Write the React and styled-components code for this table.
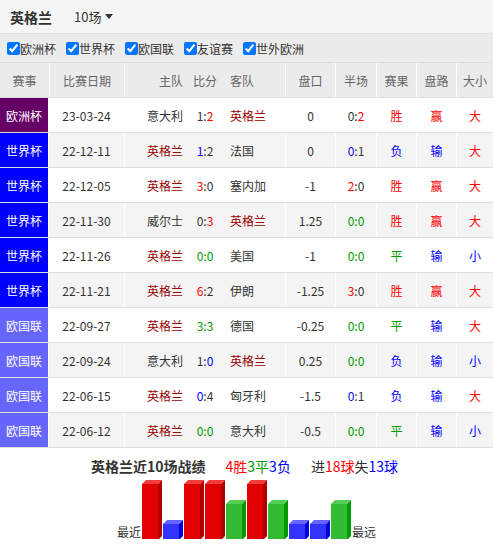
import React from 'react';
import styled, { createGlobalStyle } from 'styled-components';

const GlobalStyle = createGlobalStyle`
  body {
    margin: 0;
    background: #fff;
    font-family: "Noto Sans CJK SC", "Noto Sans", sans-serif;
    color: #333;
  }
`;

const Page = styled.div`
  width: 493px;
`;

const TopBar = styled.div`
  height: 34px;
  background: #f5f5f5;
  border-bottom: 1px solid #e2e2e2;
  box-sizing: border-box;
  display: flex;
  align-items: center;
  padding-left: 10px;
`;

const TeamTitle = styled.div`
  font-size: 14px;
  font-weight: bold;
  color: #333;
  width: 64px;
`;

const CountSelect = styled.div`
  font-size: 13px;
  color: #333;
  display: flex;
  align-items: center;
  gap: 4px;

  &::after {
    content: '';
    border-left: 4px solid transparent;
    border-right: 4px solid transparent;
    border-top: 5px solid #333;
  }
`;

const FilterBar = styled.div`
  height: 29px;
  background: #ececec;
  border-bottom: 1px solid #dedede;
  box-sizing: border-box;
  display: flex;
  align-items: center;
  padding-left: 7px;
  gap: 10px;
`;

const FilterItem = styled.label`
  display: flex;
  align-items: center;
  font-size: 12px;
  color: #333;

  input {
    margin: 0;
    width: 13px;
    height: 13px;
    accent-color: #0075ff;
  }
`;

const Row = styled.div`
  display: grid;
  grid-template-columns: 49px 75px 161px 50px 41px 40px 40px 37px;
  height: 35px;
  box-sizing: border-box;
  border-bottom: 1px solid #dddddd;
  background: ${p => (p.$head ? '#ebebeb' : p.$alt ? '#f4f4f4' : '#fff')};
  font-size: 12px;
`;

const Cell = styled.div`
  display: flex;
  align-items: center;
  justify-content: center;
  border-left: 1px solid #fff;
  color: ${p => p.$color || (p.$head ? '#666' : '#333')};

  &:first-child {
    border-left: none;
  }
`;

const EventCell = styled(Cell)`
  background: ${p => p.$bg};
  color: #fff;
  border-right: 1px solid #fff;
  & + ${Cell} {
    border-left: none;
  }
`;

const TeamsCell = styled.div`
  display: grid;
  grid-template-columns: 58px 44px 1fr;
  align-items: center;
  border-left: 1px solid #fff;
  color: ${p => (p.$head ? '#666' : '#333')};
`;

const Home = styled.span`
  text-align: right;
  color: ${p => (p.$eng ? '#990000' : 'inherit')};
`;

const Score = styled.span`
  text-align: center;
`;

const Away = styled.span`
  padding-left: 3px;
  color: ${p => (p.$eng ? '#990000' : 'inherit')};
`;

const Tone = styled.span`
  color: ${p => p.$c};
`;

const Summary = styled.div`
  padding-top: 8px;
  display: flex;
  flex-direction: column;
  align-items: center;
`;

const SummaryLine = styled.div`
  font-size: 14px;
  line-height: 20px;
  display: flex;
  gap: 20px;
  margin-left: -4px;
`;

const Lead = styled.span`
  font-weight: bold;
  color: #333;
`;

const Chart = styled.div`
  margin-top: 4px;
  display: flex;
  align-items: flex-end;
  gap: 1px;
  font-size: 12px;
  line-height: 14px;

  svg {
    display: block;
    margin-bottom: -1px;
  }
`;

const RED = '#ff0000';
const BLUE = '#0000ff';
const GREEN = '#009900';

const EVENT_BG = {
  '欧洲杯': '#660066',
  '世界杯': '#0000ff',
  '欧国联': '#6666ff',
};

const matches = [
  ['欧洲杯', '23-03-24', '意大利', '英格兰', '1:2', '0', '0:2', '胜', '赢', '大'],
  ['世界杯', '22-12-11', '英格兰', '法国', '1:2', '0', '0:1', '负', '输', '大'],
  ['世界杯', '22-12-05', '英格兰', '塞内加', '3:0', '-1', '2:0', '胜', '赢', '大'],
  ['世界杯', '22-11-30', '威尔士', '英格兰', '0:3', '1.25', '0:0', '胜', '赢', '大'],
  ['世界杯', '22-11-26', '英格兰', '美国', '0:0', '-1', '0:0', '平', '输', '小'],
  ['世界杯', '22-11-21', '英格兰', '伊朗', '6:2', '-1.25', '3:0', '胜', '赢', '大'],
  ['欧国联', '22-09-27', '英格兰', '德国', '3:3', '-0.25', '0:0', '平', '输', '大'],
  ['欧国联', '22-09-24', '意大利', '英格兰', '1:0', '0.25', '0:0', '负', '输', '小'],
  ['欧国联', '22-06-15', '英格兰', '匈牙利', '0:4', '-1.5', '0:1', '负', '输', '大'],
  ['欧国联', '22-06-12', '英格兰', '意大利', '0:0', '-0.5', '0:0', '平', '输', '小'],
];

const resultColor = { '胜': RED, '赢': RED, '大': RED, '负': BLUE, '输': BLUE, '小': BLUE, '平': GREEN };

// colour England's goals: red when ahead, blue when behind, all green on a draw
function ScoreText({ value, engHome }) {
  const [h, a] = value.split(':');
  const eng = engHome ? +h : +a;
  const opp = engHome ? +a : +h;
  if (eng === opp) return <Tone $c={GREEN}>{value}</Tone>;
  const c = eng > opp ? RED : BLUE;
  return engHome ? (
    <>
      <Tone $c={c}>{h}</Tone>:{a}
    </>
  ) : (
    <>
      {h}:<Tone $c={c}>{a}</Tone>
    </>
  );
}

const bars = ['胜', '负', '胜', '胜', '平', '胜', '平', '负', '负', '平'];
const barStyle = {
  '胜': { h: 56, front: '#e00000', top: '#f23b3b', side: '#b00000' },
  '平': { h: 36, front: '#33bb33', top: '#55cc55', side: '#009900' },
  '负': { h: 16, front: '#3333ff', top: '#6666ff', side: '#0000dd' },
};

function BarChart() {
  return (
    <svg width="209" height="60" viewBox="0 0 209 60">
      {bars.map((r, i) => {
        const { h, front, top, side } = barStyle[r];
        const x = i * 21;
        const y = 60 - h;
        return (
          <g key={i}>
            <rect x={x} y={y} width="16" height={h} fill={front} />
            <polygon points={`${x},${y} ${x + 4},${y - 4} ${x + 20},${y - 4} ${x + 16},${y}`} fill={top} />
            <polygon points={`${x + 16},${y} ${x + 20},${y - 4} ${x + 20},56 ${x + 16},60`} fill={side} />
          </g>
        );
      })}
    </svg>
  );
}

const filters = ['欧洲杯', '世界杯', '欧国联', '友谊赛', '世外欧洲'];

export default function App() {
  return (
    <Page>
      <GlobalStyle />
      <TopBar>
        <TeamTitle>英格兰</TeamTitle>
        <CountSelect>10场</CountSelect>
      </TopBar>
      <FilterBar>
        {filters.map(f => (
          <FilterItem key={f}>
            <input type="checkbox" defaultChecked />
            {f}
          </FilterItem>
        ))}
      </FilterBar>

      <Row $head>
        <Cell $head>赛事</Cell>
        <Cell $head>比赛日期</Cell>
        <TeamsCell $head>
          <Home>主队</Home>
          <Score>比分</Score>
          <Away>客队</Away>
        </TeamsCell>
        <Cell $head>盘口</Cell>
        <Cell $head>半场</Cell>
        <Cell $head>赛果</Cell>
        <Cell $head>盘路</Cell>
        <Cell $head>大小</Cell>
      </Row>

      {matches.map(([ev, date, home, away, score, line, half, res, pan, ou], i) => {
        const engHome = home === '英格兰';
        return (
          <Row key={date} $alt={i % 2 === 1}>
            <EventCell $bg={EVENT_BG[ev]}>{ev}</EventCell>
            <Cell>{date}</Cell>
            <TeamsCell>
              <Home $eng={engHome}>{home}</Home>
              <Score>
                <ScoreText value={score} engHome={engHome} />
              </Score>
              <Away $eng={!engHome}>{away}</Away>
            </TeamsCell>
            <Cell>{line}</Cell>
            <Cell>
              <ScoreText value={half} engHome={engHome} />
            </Cell>
            <Cell $color={resultColor[res]}>{res}</Cell>
            <Cell $color={resultColor[pan]}>{pan}</Cell>
            <Cell $color={resultColor[ou]}>{ou}</Cell>
          </Row>
        );
      })}

      <Summary>
        <SummaryLine>
          <Lead>英格兰近10场战绩</Lead>
          <span>
            <Tone $c={RED}>4胜</Tone>
            <Tone $c={GREEN}>3平</Tone>
            <Tone $c={BLUE}>3负</Tone>
          </span>
          <span>
            进<Tone $c={RED}>18球</Tone>失<Tone $c={BLUE}>13球</Tone>
          </span>
        </SummaryLine>
        <Chart>
          <span>最近</span>
          <BarChart />
          <span>最远</span>
        </Chart>
      </Summary>
    </Page>
  );
}
